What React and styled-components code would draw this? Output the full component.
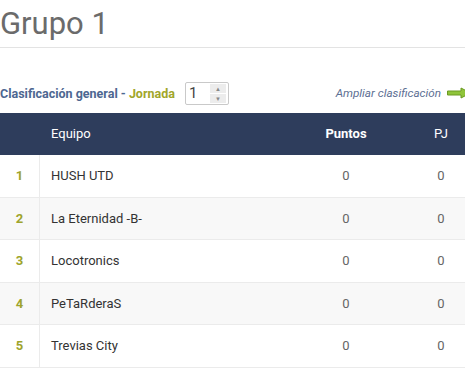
import React from 'react';
import styled, { createGlobalStyle } from 'styled-components';

const GlobalStyle = createGlobalStyle`
	html, body {
		margin: 0;
		padding: 0;
		background: #fff;
		overflow: hidden;
	}
	body {
		font-family: Roboto, 'Liberation Sans', Arial, sans-serif;
	}
`;

const Page = styled.div`
	width: 465px;
	overflow: hidden;
`;

const Title = styled.h1`
	margin: 0;
	padding: 4px 0 0;
	height: 43px;
	font-size: 31px;
	font-weight: 400;
	color: #6b6b6b;
	line-height: 40px;
	border-bottom: 1px solid #e3e3e3;
`;

const Toolbar = styled.div`
	display: flex;
	align-items: center;
	height: 24px;
	margin-top: 33px;
	margin-bottom: 8px;
`;

const Heading = styled.span`
	font-size: 12.5px;
	font-weight: 700;
	color: #4d6791;
`;

const Accent = styled.span`
	color: #a1a62a;
`;

const Spinner = styled.div`
	display: flex;
	align-items: stretch;
	width: 44px;
	height: 23px;
	margin-left: 10px;
	border: 1px solid #c9c9c9;
	border-radius: 2px;
	background: #fff;
	box-sizing: border-box;
`;

const SpinnerValue = styled.span`
	flex: 1;
	padding-left: 3px;
	font-size: 15px;
	line-height: 21px;
	color: #444;
`;

const SpinnerButtons = styled.div`
	display: flex;
	flex-direction: column;
	width: 16px;
	margin: 1px 2px 1px 0;
	gap: 1px;
`;

const SpinnerButton = styled.div`
	flex: 1;
	display: flex;
	align-items: center;
	justify-content: center;
	background: #ececec;
	font-size: 6px;
	color: #888;
`;

const MoreLink = styled.a`
	margin-left: auto;
	margin-right: -6px;
	display: flex;
	align-items: center;
	gap: 6px;
	font-size: 11.7px;
	font-style: italic;
	color: #5d6f93;
	text-decoration: none;
`;

const Table = styled.div`
	width: 520px;
`;

const Row = styled.div`
	display: grid;
	grid-template-columns: 40px 260px 92px 98px 30px;
	height: ${p => (p.$head ? 42 : 42.5)}px;
	align-items: stretch;
	background: ${p => (p.$head ? '#2e3d5c' : p.$alt ? '#f8f8f8' : '#fff')};
	border-bottom: 1px solid ${p => (p.$head ? '#2e3d5c' : '#ebebeb')};
	box-sizing: border-box;
	font-size: 13px;
	color: ${p => (p.$head ? '#fff' : '#333')};
`;

const Cell = styled.div`
	display: flex;
	align-items: center;
	justify-content: ${p => (p.$center ? 'center' : 'flex-start')};
	padding-left: ${p => (p.$center ? 0 : 11)}px;
	font-weight: ${p => (p.$bold ? 700 : 400)};
	color: ${p => p.$color || 'inherit'};
	border-right: ${p => (p.$divider ? '1px solid #ebebeb' : 'none')};
`;

const Arrow = () => (
	<svg width='24' height='12' viewBox='0 0 24 12'>
		<path
			d='M0.5 4 H14 V1 L23.5 6 L14 11 V8 H0.5 Z'
			fill='#8fc43a'
			stroke='#6a9a22'
			strokeWidth='1'
		/>
	</svg>
);

const teams = ['HUSH UTD', 'La Eternidad -B-', 'Locotronics', 'PeTaRderaS', 'Trevias City'];

const App = () => (
	<Page>
		<GlobalStyle />
		<Title>Grupo 1</Title>
		<Toolbar>
			<Heading>
				Clasificación general - <Accent>Jornada</Accent>
			</Heading>
			<Spinner>
				<SpinnerValue>1</SpinnerValue>
				<SpinnerButtons>
					<SpinnerButton>▲</SpinnerButton>
					<SpinnerButton>▼</SpinnerButton>
				</SpinnerButtons>
			</Spinner>
			<MoreLink href='#'>
				Ampliar clasificación <Arrow />
			</MoreLink>
		</Toolbar>
		<Table>
			<Row $head>
				<Cell />
				<Cell>Equipo</Cell>
				<Cell $center $bold>Puntos</Cell>
				<Cell $center>PJ</Cell>
				<Cell />
			</Row>
			{teams.map((team, i) => (
				<Row key={team} $alt={i % 2 === 1}>
					<Cell $center $bold $divider $color='#9ea42c'>
						{i + 1}
					</Cell>
					<Cell>{team}</Cell>
					<Cell $center $color='#666'>0</Cell>
					<Cell $center $color='#666'>0</Cell>
					<Cell />
				</Row>
			))}
		</Table>
	</Page>
);

export default App;
